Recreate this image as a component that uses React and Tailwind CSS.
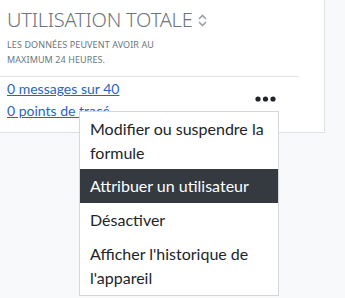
import React from "react";

export default function App() {
  return (
    <div className="relative w-[345px] h-[298px] overflow-hidden bg-[#f8f9fa]" style={{ fontFamily: '"Noto Sans", sans-serif' }}>
      <div className="w-[325px] bg-white border-r border-b border-[#dee2e6] pb-[10px]">
        <div className="pl-[7px] pt-[6px]">
          <div className="flex items-center text-[20px] leading-[28px] font-light text-[#6c757d] tracking-[-0.2px]">
            UTILISATION TOTALE
            <svg className="ml-[5px]" width="9" height="13" viewBox="0 0 9 13" fill="none" stroke="#9aa0a6" strokeWidth="1.6">
              <path d="M1 5 L4.5 1.5 L8 5" />
              <path d="M1 8 L4.5 11.5 L8 8" />
            </svg>
          </div>
          <div className="mt-[3px] text-[9px] leading-[15px] text-[#6c757d] uppercase tracking-[0.1px]">
            LES DONNÉES PEUVENT AVOIR AU<br />MAXIMUM 24 HEURES.
          </div>
        </div>
        <div className="mt-[9px] w-[299px] border-t border-[#dee2e6]"></div>
        <div className="flex items-center pl-[7px] pt-[1px]" style={{ fontFamily: 'Lato, sans-serif' }}>
          <div className="flex flex-col text-[14px] leading-[22px] text-[#2a64c2]">
            <a className="underline" href="#">0 messages sur 40</a>
            <a className="underline" href="#">0 points de tracé</a>
          </div>
          <svg className="ml-auto mr-[48px] mt-[-2px]" width="21" height="6" viewBox="0 0 21 6" fill="#212529">
            <circle cx="3" cy="3" r="2.6" />
            <circle cx="10.5" cy="3" r="2.6" />
            <circle cx="18" cy="3" r="2.6" />
          </svg>
        </div>
      </div>
      <div className="absolute left-[79px] top-[111px] w-[200px] bg-white border border-[#d5d8db] text-[16px] leading-[24px] text-[#212529]" style={{ fontFamily: 'Lato, sans-serif' }}>
        <div className="px-[10px] pt-[5px] pb-[4px]">Modifier ou suspendre la formule</div>
        <div className="px-[10px] py-[5px] bg-[#343a40] text-white">Attribuer un utilisateur</div>
        <div className="px-[10px] py-[5px]">Désactiver</div>
        <div className="px-[10px] py-[5px]">Afficher l'historique de l'appareil</div>
      </div>
    </div>
  );
}
